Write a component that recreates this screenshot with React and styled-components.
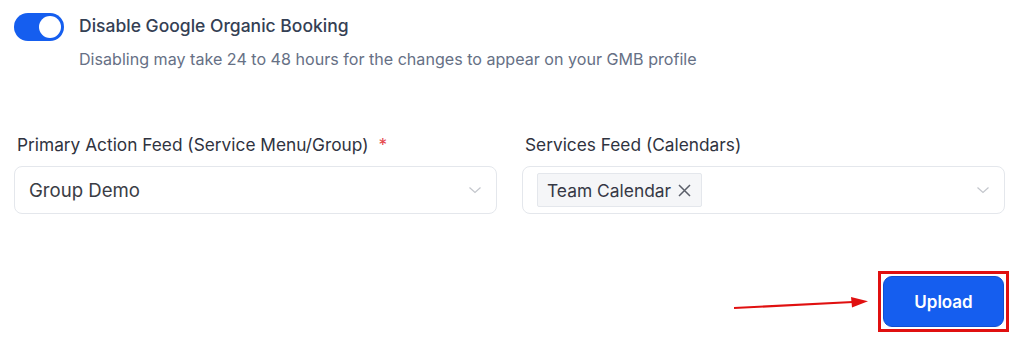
import styled, { createGlobalStyle } from 'styled-components';

const GlobalStyle = createGlobalStyle`
	body {
		margin: 0;
		background: #ffffff;
		font-family: Inter, "Noto Sans", sans-serif;
	}
`;

const Page = styled.div`
	padding: 13px 14px 0 14px;
`;

const ToggleRow = styled.div`
	display: flex;
	align-items: flex-start;
	gap: 15px;
`;

const Switch = styled.button`
	position: relative;
	flex: none;
	width: 50px;
	height: 28px;
	padding: 0;
	border: none;
	border-radius: 14px;
	background-color: ${(p) => (p.$on ? '#155eef' : '#e4e7ec')};
	cursor: pointer;

	&::after {
		content: '';
		position: absolute;
		top: 3px;
		left: ${(p) => (p.$on ? '25px' : '3px')};
		width: 22px;
		height: 22px;
		border-radius: 50%;
		background-color: white;
	}
`;

const ToggleText = styled.div`
	display: flex;
	flex-direction: column;
	gap: 12px;
	padding-top: 2px;
`;

const ToggleTitle = styled.div`
	font-size: 17.5px;
	line-height: 22px;
	font-weight: 450;
	color: #344054;
`;

const ToggleHint = styled.div`
	font-size: 16.1px;
	line-height: 20px;
	color: #667085;
`;

const Fields = styled.div`
	display: grid;
	grid-template-columns: 1fr 1fr;
	gap: 25px;
	margin-top: 64px;
`;

const Field = styled.div`
	display: flex;
	flex-direction: column;
	gap: 9px;
`;

const Label = styled.label`
	padding-left: 3px;
	font-size: 17.3px;
	line-height: 24px;
	color: #2f3340;
`;

const Required = styled.span`
	margin-left: 10px;
	color: #e5484d;
`;

const SelectBox = styled.div`
	display: flex;
	align-items: center;
	height: 48px;
	box-sizing: border-box;
	padding: 0 14px;
	border: 1px solid #e4e7ec;
	border-radius: 8px;
	background: white;
`;

const Value = styled.div`
	flex: 1;
	font-size: 18.6px;
	color: #3a3d45;
`;

const Tags = styled.div`
	flex: 1;
	display: flex;
	gap: 6px;
`;

const Tag = styled.span`
	display: inline-flex;
	align-items: center;
	gap: 7px;
	height: 34px;
	box-sizing: border-box;
	padding: 0 10px 0 9px;
	border: 1px solid #e4e7ec;
	border-radius: 2px;
	background-color: #f5f6f8;
	font-size: 17.4px;
	color: #353845;
`;

const Chevron = () => (
	<svg width="14" height="14" viewBox="0 0 14 14" fill="none" stroke="#c3c6cc" strokeWidth="1.2">
		<path d="M1.5 4.5L7 9.5L12.5 4.5" />
	</svg>
);

const Close = () => (
	<svg width="13" height="13" viewBox="0 0 13 13" fill="none" stroke="#5b5f69" strokeWidth="1.5">
		<path d="M1 1L12 12M12 1L1 12" />
	</svg>
);

const Footer = styled.div`
	display: flex;
	justify-content: flex-end;
	align-items: center;
	gap: 9px;
	margin-top: 57px;
	margin-right: -4px;
`;

const Highlight = styled.div`
	padding: 2px;
	border: 3px solid #e01010;
`;

const UploadButton = styled.button`
	display: block;
	width: 121px;
	height: 51px;
	border: 1px solid #0f4fd1;
	border-radius: 9px;
	background-color: #155eef;
	color: white;
	font-family: Inter, "Noto Sans", sans-serif;
	font-size: 17px;
	font-weight: 600;
	cursor: pointer;
`;

const Arrow = () => (
	<svg width="136" height="16" viewBox="0 0 136 16" style={{ marginTop: '4px' }}>
		<path d="M1 12L120 6" stroke="#e01010" strokeWidth="2.2" fill="none" />
		<path d="M118 1L135 5.2L119 11.5Z" fill="#e01010" />
	</svg>
);

export default function App() {
	return (
		<Page>
			<GlobalStyle />
			<ToggleRow>
				<Switch $on aria-label="Disable Google Organic Booking" />
				<ToggleText>
					<ToggleTitle>Disable Google Organic Booking</ToggleTitle>
					<ToggleHint>Disabling may take 24 to 48 hours for the changes to appear on your GMB profile</ToggleHint>
				</ToggleText>
			</ToggleRow>
			<Fields>
				<Field>
					<Label>
						Primary Action Feed (Service Menu/Group)
						<Required>*</Required>
					</Label>
					<SelectBox>
						<Value>Group Demo</Value>
						<Chevron />
					</SelectBox>
				</Field>
				<Field>
					<Label>Services Feed (Calendars)</Label>
					<SelectBox>
						<Tags>
							<Tag>
								Team Calendar
								<Close />
							</Tag>
						</Tags>
						<Chevron />
					</SelectBox>
				</Field>
			</Fields>
			<Footer>
				<Arrow />
				<Highlight>
					<UploadButton>Upload</UploadButton>
				</Highlight>
			</Footer>
		</Page>
	);
}
